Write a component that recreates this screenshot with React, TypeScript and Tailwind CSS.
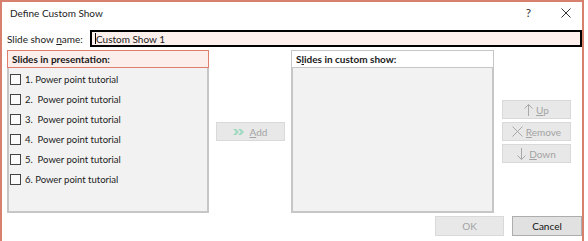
import React from 'react';

const items = ['1. Power point tutorial', '2.  Power point tutorial', '3.  Power point tutorial', '4.  Power point tutorial', '5.  Power point tutorial', '6. Power point tutorial'];

function Btn({ children, disabled, className = '' }: { children: React.ReactNode; disabled?: boolean; className?: string }) {
  return (
    <div
      className={`w-[69px] h-[19px] flex items-center justify-center gap-[3px] border whitespace-nowrap ${
        disabled ? 'bg-[#e8e8e8] border-[#d9d9d9] text-[#a3a3a3]' : 'bg-[#e1e1e1] border-[#adadad] text-[#111]'
      } ${className}`}
    >
      {children}
    </div>
  );
}

export default function App() {
  return (
    <div className="w-[588px] h-[241px] bg-white overflow-hidden font-['Lato',sans-serif] text-[10px] text-[#1a1a1a] leading-none">
      <div className="w-[584px] h-[241px] border-t-2 border-l-2 border-r-2 border-[#d8806e] flex flex-col">
        {/* title bar */}
        <div className="h-[22px] flex items-center pl-[8px] shrink-0">
          <span className="text-[#222]">Define Custom Show</span>
          <span className="ml-auto text-[12px] text-[#333] mr-[30px]">?</span>
          <svg width="10" height="10" viewBox="0 0 10 10" className="mr-[11px]">
            <path d="M0.5 0.5 L9.5 9.5 M9.5 0.5 L0.5 9.5" stroke="#333" strokeWidth="1" />
          </svg>
        </div>

        {/* name row */}
        <div className="mt-[6px] flex items-center pl-[5px] shrink-0">
          <span className="w-[83px] whitespace-nowrap">
            Slide show <span className="underline">n</span>ame:
          </span>
          <div className="w-[492px] h-[17px] border-2 border-black bg-[#fcefec] flex items-center pl-[3px] whitespace-nowrap">
            <span className="w-px h-[11px] bg-black" />
            <span>Custom Show 1</span>
          </div>
        </div>

        {/* main row */}
        <div className="mt-[3px] flex pl-[5px] shrink-0">
          <div className="w-[202px] h-[163px] border-x-2 border-b-2 border-[#c6c6c6] bg-[#f2f2f2] flex flex-col">
            <div className="h-[18px] -mx-[2px] border border-[#e07e6d] bg-[#fbeeeb] flex items-center pl-[4px] font-bold whitespace-nowrap">Slides in presentation:</div>
            <div className="flex flex-col gap-[7px] pt-[5px] pl-[1px]">
              {items.map(t => (
                <div key={t} className="flex items-center gap-[4px] h-[13px] text-[9.5px]">
                  <span className="w-[11px] h-[11px] border border-[#444] bg-[#fafafa]" />
                  <span className="whitespace-pre">{t}</span>
                </div>
              ))}
            </div>
          </div>

          <div className="w-[82px] flex items-center justify-center">
            <Btn disabled>
              <svg width="14" height="8" viewBox="0 0 14 8">
                <path d="M0 1 L3 4 L0 7 H3 L6 4 L3 1 Z M5 1 L8 4 L5 7 H8 L11 4 L8 1 Z" fill="#9fd9c0" />
              </svg>
              <span><span className="underline">A</span>dd</span>
            </Btn>
          </div>

          <div className="w-[203px] h-[163px] border-x-2 border-b-2 border-[#c6c6c6] bg-[#f2f2f2] flex flex-col">
            <div className="h-[18px] -mx-[2px] border border-[#c6c6c6] bg-white flex items-center pl-[4px] font-bold whitespace-nowrap">
              S<span className="underline">l</span>ides in custom show:
            </div>
          </div>

          <div className="ml-[8px] flex flex-col justify-center gap-[3px]">
            <Btn disabled>
              <svg width="9" height="12" viewBox="0 0 9 12">
                <path d="M4.5 0.5 V12 M0.5 4.5 L4.5 0.5 L8.5 4.5" stroke="#a8a8a8" fill="none" />
              </svg>
              <span><span className="underline">U</span>p</span>
            </Btn>
            <Btn disabled>
              <svg width="11" height="11" viewBox="0 0 11 11">
                <path d="M0.5 0.5 L10.5 10.5 M10.5 0.5 L0.5 10.5" stroke="#a8a8a8" />
              </svg>
              <span><span className="underline">R</span>emove</span>
            </Btn>
            <Btn disabled>
              <svg width="9" height="12" viewBox="0 0 9 12">
                <path d="M4.5 0 V11.5 M0.5 7.5 L4.5 11.5 L8.5 7.5" stroke="#a8a8a8" fill="none" />
              </svg>
              <span><span className="underline">D</span>own</span>
            </Btn>
          </div>
        </div>

        {/* bottom */}
        <div className="mt-[3px] flex justify-end gap-[8px] shrink-0">
          <Btn disabled className="h-[20px]">OK</Btn>
          <Btn className="h-[20px] w-[70px]">Cancel</Btn>
        </div>
      </div>
    </div>
  );
}
